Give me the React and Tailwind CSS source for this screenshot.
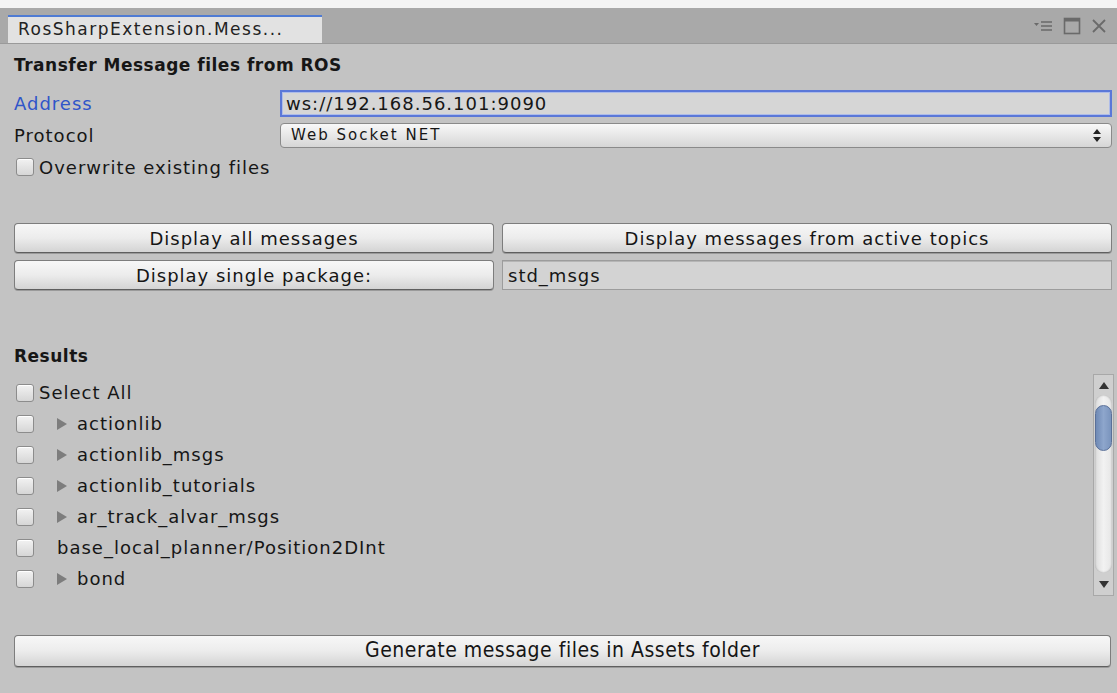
import React from 'react';

const rows = [
  { name: 'actionlib', folder: true },
  { name: 'actionlib_msgs', folder: true },
  { name: 'actionlib_tutorials', folder: true },
  { name: 'ar_track_alvar_msgs', folder: true },
  { name: 'base_local_planner/Position2DInt', folder: false },
  { name: 'bond', folder: true },
];

function Check() {
  return (
    <span className="ml-[2px] w-[18px] h-[18px] shrink-0 rounded-[3px] border border-[#8c8c8c] bg-gradient-to-b from-[#f2f2f2] to-[#d6d6d6] shadow-[inset_0_1px_0_#fff]" />
  );
}

function Btn({ children, className = '' }) {
  return (
    <button className={`h-[30px] flex items-center justify-center rounded-[4px] border border-[#7d7d7d] border-b-[#5f5f5f] bg-gradient-to-b from-[#f7f7f7] via-[#ececec] to-[#d4d4d4] shadow-[0_1px_0_#9a9a9a] text-[#151515] ${className}`}>
      {children}
    </button>
  );
}

function TabIcons() {
  return (
    <div className="flex items-center gap-[10px] pr-[10px]">
      <svg width="20" height="14" viewBox="0 0 20 14">
        <path d="M1 4h5l-2.5 3z" fill="#6a6a6a" />
        <path d="M8 3h11M8 7h11M8 11h11" stroke="#6a6a6a" strokeWidth="1.6" />
      </svg>
      <svg width="18" height="18" viewBox="0 0 18 18">
        <rect x="1.5" y="1.5" width="15" height="15" fill="none" stroke="#6a6a6a" strokeWidth="1.6" />
        <rect x="1.5" y="1.5" width="15" height="3" fill="#6a6a6a" />
      </svg>
      <svg width="16" height="16" viewBox="0 0 16 16">
        <path d="M2 2l12 12M14 2L2 14" stroke="#6a6a6a" strokeWidth="1.8" />
      </svg>
    </div>
  );
}

function Scrollbar() {
  return (
    <div className="w-[21px] h-[222px] flex flex-col border border-[#a8a8a8] bg-[#cfcfcf]">
      <div className="h-[20px] flex items-center justify-center">
        <svg width="10" height="7" viewBox="0 0 10 7"><path d="M5 0l5 7H0z" fill="#333" /></svg>
      </div>
      <div className="flex-1 px-[1px] flex flex-col">
        <div className="flex-1 rounded-[10px] bg-gradient-to-r from-[#dcdcdc] via-[#f2f2f2] to-[#e6e6e6] shadow-[inset_0_0_2px_#999] flex flex-col">
          <div className="h-[46px] mt-[10px] rounded-[10px] bg-gradient-to-r from-[#6f8ab5] via-[#8ea6cc] to-[#7a94bd] border border-[#5a7099]" />
        </div>
      </div>
      <div className="h-[22px] flex items-center justify-center">
        <svg width="10" height="7" viewBox="0 0 10 7"><path d="M0 0h10L5 7z" fill="#333" /></svg>
      </div>
    </div>
  );
}

export default function App() {
  return (
    <div className="w-[1117px] h-[693px] flex flex-col bg-[#c3c3c3] text-[18px] tracking-[1px] text-[#161616] font-['DejaVu_Sans',sans-serif] overflow-hidden">
      <div className="h-[8px] bg-[#f4f4f4]" />

      {/* tab strip */}
      <div className="h-[36px] flex items-end justify-between bg-[#a9a9a9] border-b border-[#9a9a9a]">
        <div className="ml-[8px] w-[314px] h-[28px] flex items-center px-[10px] bg-[#e2e2e2] border-t-[2px] border-[#4f7bd3] text-[17px] text-[#222] tracking-[1.5px]">
          RosSharpExtension.Mess...
        </div>
        <div className="self-center">
          <TabIcons />
        </div>
      </div>

      <div className="flex flex-col pl-[14px] pr-[5px]">
        <div className="h-[22px] mt-[11px] flex items-center font-bold text-[17px] tracking-[0.5px]">Transfer Message files from ROS</div>

        <div className="mt-[13px] h-[27px] flex items-center">
          <span className="w-[266px] text-[#2f55c9]">Address</span>
          <div className="flex-1 h-full flex items-center px-[4px] bg-[#d6d6d6] border-2 border-[#5b78d8] shadow-[inset_0_0_0_1px_#aebce9]">
            ws://192.168.56.101:9090
          </div>
        </div>

        <div className="mt-[6px] h-[25px] flex items-center">
          <span className="w-[266px]">Protocol</span>
          <div className="flex-1 h-full flex items-center justify-between px-[10px] rounded-[4px] border border-[#8a8a8a] bg-gradient-to-b from-[#f8f8f8] to-[#d6d6d6] text-[15px] tracking-[2px]">
            <span>Web Socket NET</span>
            <svg width="8" height="13" viewBox="0 0 8 13"><path d="M4 0l4 5H0zM4 13l4-5H0z" fill="#222" /></svg>
          </div>
        </div>

        <div className="mt-[8px] h-[22px] flex items-center gap-[5px]">
          <Check />
          <span>Overwrite existing files</span>
        </div>

        <div className="mt-[45px] flex gap-[8px]">
          <Btn className="w-[480px]">Display all messages</Btn>
          <Btn className="flex-1">Display messages from active topics</Btn>
        </div>

        <div className="mt-[7px] flex gap-[8px]">
          <Btn className="w-[480px]">Display single package:</Btn>
          <div className="flex-1 h-[30px] flex items-center px-[5px] bg-[#d3d3d3] border border-[#9c9c9c] shadow-[inset_0_1px_0_#b5b5b5]">std_msgs</div>
        </div>

        <div className="mt-[56px] h-[22px] flex items-center font-bold text-[17px] tracking-[0.5px]">Results</div>

        <div className="mt-[9px] flex">
          <div className="flex-1 flex flex-col">
            <div className="h-[31px] flex items-center gap-[5px]">
              <Check />
              <span>Select All</span>
            </div>
            {rows.map((r) => (
              <div key={r.name} className="h-[31px] flex items-center">
                <Check />
                <span className="w-[23px]" />
                {r.folder && (
                  <svg className="mr-[10px]" width="10" height="12" viewBox="0 0 10 12"><path d="M0 0l10 6-10 6z" fill="#7d7d7d" /></svg>
                )}
                <span>{r.name}</span>
              </div>
            ))}
          </div>
          <div className="-mr-[2px] -mt-[3px]">
            <Scrollbar />
          </div>
        </div>

        <Btn className="mt-[39px] w-[1097px] h-[32px] text-[21px] tracking-[0.5px] font-['DejaVu_Sans_Condensed','DejaVu_Sans',sans-serif]">
          Generate message files in Assets folder
        </Btn>
      </div>
    </div>
  );
}
